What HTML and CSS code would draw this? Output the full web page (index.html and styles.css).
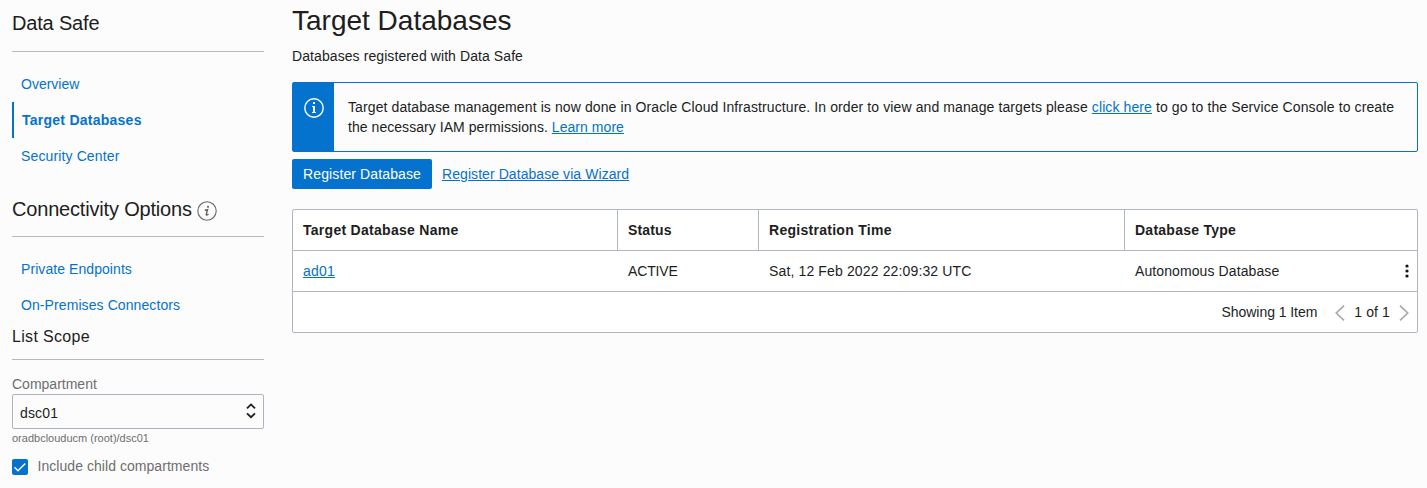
FILE: index.html
```html
<!DOCTYPE html>
<html lang="en">
<head>
<meta charset="utf-8">
<title>Target Databases</title>
<link rel="stylesheet" href="styles.css">
</head>
<body>
<div class="layout">
  <aside class="sidebar">
    <h2 class="side-title"><span class="t-safe">Data Safe</span></h2>
    <nav class="nav">
      <a class="nav-item" href="#"><span class="t-overview">Overview</span></a>
      <a class="nav-item active" href="#"><span class="t-targets">Target Databases</span></a>
      <a class="nav-item" href="#"><span class="t-security">Security Center</span></a>
    </nav>
    <h2 class="side-title connectivity"><span class="t-connectivity">Connectivity Options</span>
      <svg class="info-outline" width="20" height="20" viewBox="0 0 20 20"><circle cx="10" cy="10" r="9.2" fill="none" stroke="#6b6b6b" stroke-width="1.1"/><circle cx="11" cy="5.8" r="1.1" fill="#666"/><path d="M7.8 9.2 10.6 8.6 9.2 13.4Q8.9 14.9 11.5 13.2" fill="none" stroke="#666" stroke-width="1.4"/></svg>
    </h2>
    <nav class="nav">
      <a class="nav-item" href="#"><span class="t-private">Private Endpoints</span></a>
      <a class="nav-item" href="#"><span class="t-onprem">On-Premises Connectors</span></a>
    </nav>
    <h3 class="scope-title"><span class="t-scope">List Scope</span></h3>
    <div class="field-label">Compartment</div>
    <div class="select"><span class="t-select">dsc01</span>
      <svg width="10" height="16" viewBox="0 0 10 16" fill="none" stroke="#201e1c" stroke-width="1.8"><path d="M1 5.3 5 1.4 9 5.3M1 10.3 5 14.2 9 10.3"/></svg>
    </div>
    <div class="hint">oradbclouducm (root)/dsc01</div>
    <div class="check-row">
      <svg width="16" height="16" viewBox="0 0 16 16"><rect width="16" height="16" rx="2" fill="#0572ce"/><path d="M2.5 8.3 6 11.8 13.3 4.5" fill="none" stroke="#fff" stroke-width="1.5"/></svg>
      <span class="t-child">Include child compartments</span>
    </div>
  </aside>
  <main class="main">
    <h1 class="page-title">Target Databases</h1>
    <p class="subtitle"><span class="t-subtitle">Databases registered with Data Safe</span></p>
    <section class="notice">
      <div class="notice-icon">
        <svg width="20" height="20" viewBox="0 0 20 20"><circle cx="10" cy="10" r="9.2" fill="none" stroke="#fff" stroke-width="1.4"/><path d="M9 4h2v2H9zM8 8h3v6h1v1H8v-1h1V9H8z" fill="#fff"/></svg>
      </div>
      <div class="notice-text">
        <div><span class="t-line1">Target database management is now done in Oracle Cloud Infrastructure. In order to view and manage targets please <a href="#">click here</a> to go to the Service Console to create</span></div>
        <div><span class="t-line2">the necessary IAM permissions. <a href="#">Learn more</a></span></div>
      </div>
    </section>
    <div class="actions">
      <button class="primary"><span class="t-register">Register Database</span></button>
      <a href="#" class="t-wizard">Register Database via Wizard</a>
    </div>
    <div class="table">
      <div class="row head">
        <div class="cell"><span class="t-h1">Target Database Name</span></div>
        <div class="cell"><span class="t-h2">Status</span></div>
        <div class="cell"><span class="t-h3">Registration Time</span></div>
        <div class="cell"><span class="t-h4">Database Type</span></div>
      </div>
      <div class="row">
        <div class="cell"><a href="#" class="t-name">ad01</a></div>
        <div class="cell"><span class="t-active">ACTIVE</span></div>
        <div class="cell"><span class="t-date">Sat, 12 Feb 2022 22:09:32 UTC</span></div>
        <div class="cell last"><span class="t-auto">Autonomous Database</span>
          <svg width="4" height="14" viewBox="0 0 4 14" fill="#111"><circle cx="2" cy="2" r="1.6"/><circle cx="2" cy="7" r="1.6"/><circle cx="2" cy="12" r="1.6"/></svg>
        </div>
      </div>
      <div class="footer">
        <span class="t-showing">Showing 1 Item</span>
        <svg class="prev" width="10" height="16" viewBox="0 0 10 16"><path d="M9 .7 1.3 8 9 15.3" fill="none" stroke="#aaa" stroke-width="1.7"/></svg>
        <span class="t-page">1 of 1</span>
        <svg class="next" width="10" height="16" viewBox="0 0 10 16"><path d="M1 .7 8.7 8 1 15.3" fill="none" stroke="#aaa" stroke-width="1.7"/></svg>
      </div>
    </div>
  </main>
</div>
</body>
</html>
```
FILE: styles.css
```css
* { box-sizing: border-box; }
body {
  margin: 0;
  height: 488px;
  overflow: hidden;
  background: #fcfcfc;
  color: #201e1c;
  font: 14px/20px "Liberation Sans", Arial, sans-serif;
  white-space: nowrap;
}
h1, h2, h3, p { margin: 0; font-weight: 400; }
a { color: #0572ce; text-underline-offset: 1px; text-decoration-thickness: 1px; }
svg { display: block; flex: none; }
.layout { display: flex; gap: 28px; padding: 0 9px 0 12px; }
.sidebar { width: 252px; flex: none; }
.main { flex: 1; min-width: 0; }

.side-title {
  display: flex;
  height: 52px;
  padding-top: 11px;
  border-bottom: 1px solid #b4b9c2;
  font-size: 20px;
  line-height: 24px;
  letter-spacing: -0.18px;
}
.connectivity { height: 63px; padding-top: 23px; }
.info-outline { margin: 4px 0 0 5px; }
.nav { padding-top: 14px; }
.nav-item {
  display: block;
  height: 36px;
  padding: 8px 0 8px 9px;
  text-decoration: none;
}
.nav-item.active { padding-left: 8px; border-left: 2px solid #0572ce; font-weight: 700; }
.scope-title {
  height: 37px;
  padding-top: 4px;
  border-bottom: 1px solid #b4b9c2;
  font-size: 16px;
}
.field-label { padding-top: 14px; color: #6e6e6e; }
.select {
  display: flex;
  justify-content: space-between;
  align-items: center;
  height: 35px;
  padding: 2px 7px 0;
  border: 1px solid #b0b4c0;
  border-radius: 2px;
}
.select svg { margin-bottom: 4px; }
.hint { height: 18px; font-size: 11px; line-height: 18px; color: #6e6e6e; }
.check-row {
  display: flex;
  align-items: flex-start;
  gap: 9.5px;
  padding-top: 9px;
  color: #6e6e6e;
}
.check-row svg { margin-top: 3px; }

.page-title { height: 46px; padding-top: 5px; font-size: 28px; line-height: 32px; }
.subtitle { height: 36px; }
.notice {
  display: flex;
  height: 70px;
  border: 1px solid #0572ce;
  border-radius: 2px;
}
.notice-icon { width: 41px; padding: 15px 0 0 11px; background: #0572ce; }
.notice-text { padding: 14px 0 0 14px; }
.actions { display: flex; align-items: center; gap: 10px; margin: 7px 0 20px; }
.primary {
  width: 140px;
  height: 30px;
  padding: 0;
  border: 0;
  border-radius: 2px;
  background: #0572ce;
  color: #fff;
  font: inherit;
}

.table { border: 1px solid #b0b7c0; border-radius: 2px; background: #fff; }
.row {
  display: grid;
  grid-template-columns: 324px 141px 366px 1fr;
  height: 41px;
  border-bottom: 1px solid #b0b7c0;
}
.cell { display: flex; align-items: center; padding-left: 10px; }
.cell + .cell { border-left: 1px solid transparent; }
.head { font-weight: 700; }
.head .cell + .cell { border-left-color: #b0b7c0; }
.last { justify-content: space-between; padding-right: 8px; }
.footer { display: flex; justify-content: flex-end; align-items: center; height: 40px; padding-right: 8px; }
.prev { margin: 2px 9px 0 18px; }
.next { margin: 2px 0 0 9px; }

/* Text tracking */
.t-targets, .t-h4, .t-name { letter-spacing: 0.25px; }
.t-h1, .t-h3 { letter-spacing: 0.28px; }
.t-h2 { letter-spacing: 0.15px; }
.t-security { letter-spacing: 0.13px; }
.t-private { letter-spacing: 0.07px; }
.t-onprem { letter-spacing: 0.09px; }
.t-scope { letter-spacing: 0.33px; }
.t-select { letter-spacing: 0.15px; }
.t-child { letter-spacing: 0.05px; }
.t-subtitle { letter-spacing: 0.085px; }
.t-line1 { letter-spacing: 0.101px; }
.t-line2 { letter-spacing: 0.05px; }
.t-register { letter-spacing: 0.12px; }
.t-wizard { letter-spacing: 0.07px; }
.t-active { letter-spacing: -0.15px; }
.t-date { letter-spacing: 0.14px; }
.t-auto { letter-spacing: 0.1px; }
.t-showing { letter-spacing: -0.06px; }
.t-page { letter-spacing: 0.12px; }
```
